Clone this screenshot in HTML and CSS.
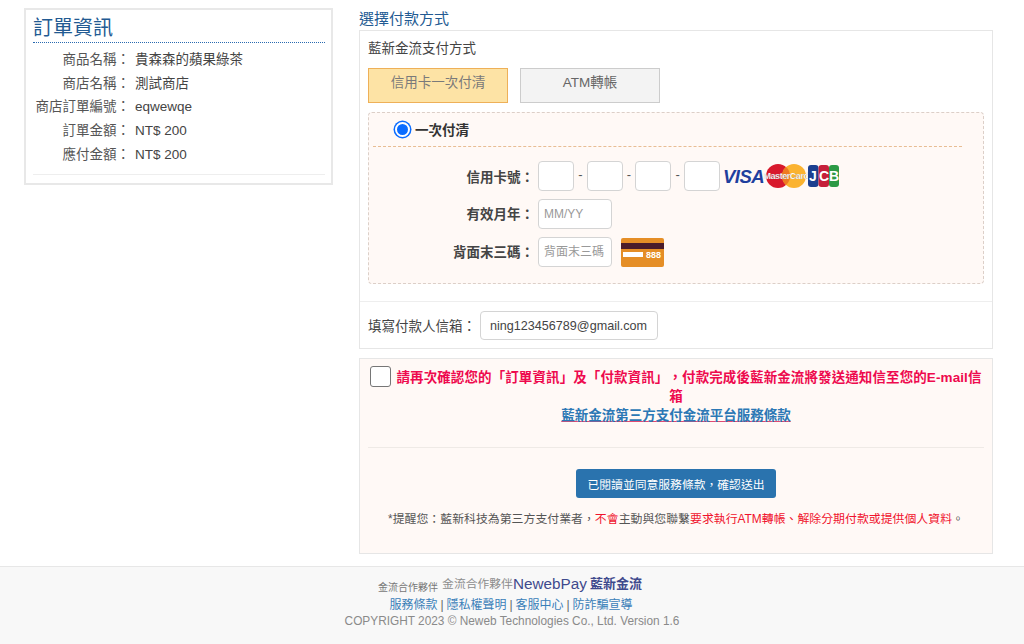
FILE: index.html
```html
<!DOCTYPE html>
<html lang="zh-Hant">
<head>
<meta charset="utf-8">
<title>選擇付款方式</title>
<link rel="stylesheet" href="styles.css">
</head>
<body>
<main class="page">
  <aside class="order">
    <h2 class="order-title">訂單資訊</h2>
    <dl class="order-list">
      <div class="order-row"><dt>商品名稱：</dt><dd>貴森森的蘋果綠茶</dd></div>
      <div class="order-row"><dt>商店名稱：</dt><dd>測試商店</dd></div>
      <div class="order-row"><dt>商店訂單編號：</dt><dd>eqwewqe</dd></div>
      <div class="order-row"><dt>訂單金額：</dt><dd>NT$ 200</dd></div>
      <div class="order-row"><dt>應付金額：</dt><dd>NT$ 200</dd></div>
    </dl>
  </aside>
  <section class="pay">
    <h3 class="pay-title">選擇付款方式</h3>
    <div class="panel">
      <div class="panel-body">
        <div class="method-title">藍新金流支付方式</div>
        <div class="tabs">
          <div class="tab tab-active">信用卡一次付清</div>
          <div class="tab">ATM轉帳</div>
        </div>
        <div class="card-box">
          <div class="radio-row">
            <span class="radio"></span>
            <span class="radio-label">一次付清</span>
          </div>
          <div class="form-row row-number">
            <span class="form-label">信用卡號：</span>
            <span class="input input-digit"></span><span class="dash">-</span>
            <span class="input input-digit"></span><span class="dash">-</span>
            <span class="input input-digit"></span><span class="dash">-</span>
            <span class="input input-digit"></span>
            <svg class="brands" width="118" height="26" viewBox="0 0 118 26" aria-label="VISA MasterCard JCB">
              <text x="1" y="19.500" class="visa">VISA</text>
              <circle cx="56" cy="13" r="12" fill="#d8192c"/>
              <circle cx="72" cy="13" r="12" fill="#fbb330"/>
              <path d="M64 4a12 12 0 0 1 0 18a12 12 0 0 1 0-18z" fill="#ee7a22"/>
              <text x="64" y="16" class="mc">MasterCard</text>
              <rect x="86" y="2" width="10.500" height="22" rx="3" fill="#1c3f8f"/>
              <rect x="96.500" y="2" width="10.500" height="22" rx="3" fill="#c5203a"/>
              <rect x="107" y="2" width="10" height="22" rx="3" fill="#2c9a45"/>
              <text x="91 102 112" y="18" class="jcb">JCB</text>
            </svg>
          </div>
          <div class="form-row">
            <span class="form-label form-label-up">有效月年：</span>
            <span class="input input-wide placeholder">MM/YY</span>
          </div>
          <div class="form-row">
            <span class="form-label form-label-up">背面末三碼：</span>
            <span class="input input-wide placeholder">背面末三碼</span>
            <svg class="cvc" width="43" height="30" viewBox="0 0 43 30" aria-label="888">
              <rect y="1" width="43" height="29" rx="2" fill="#e58e26"/>
              <rect y="6" width="43" height="6" fill="#4a1c2a"/>
              <rect x="2" y="15" width="20" height="5" fill="#fff"/>
              <text x="25" y="20.500" class="cvc-text">888</text>
            </svg>
          </div>
        </div>
      </div>
      <div class="email-row">
        <span class="email-label">填寫付款人信箱：</span>
        <span class="input input-email">ning123456789@gmail.com</span>
      </div>
    </div>
    <div class="confirm">
      <div class="confirm-text">
        <p class="warn"><span class="checkbox"></span>請再次確認您的「訂單資訊」及「付款資訊」，付款完成後藍新金流將發送通知信至您的E-mail信箱</p>
        <a class="terms" href="#">藍新金流第三方支付金流平台服務條款</a>
      </div>
      <div class="confirm-rule"></div>
      <div class="submit-wrap"><button class="submit" type="button">已閱讀並同意服務條款，確認送出</button></div>
      <p class="notice">*提醒您：藍新科技為第三方支付業者，<span class="red">不會</span>主動與您聯繫<span class="red">要求執行ATM轉帳、解除分期付款或提供個人資料</span>。</p>
    </div>
  </section>
</main>
<footer class="footer">
  <div class="partner"><span class="partner-small">金流合作夥伴</span><span class="partner-mid">金流合作夥伴</span><span class="partner-brand">NewebPay</span><span class="partner-cn">藍新金流</span></div>
  <div class="links"><a href="#">服務條款</a> | <a href="#">隱私權聲明</a> | <a href="#">客服中心</a> | <a href="#">防詐騙宣導</a></div>
  <div class="copy">COPYRIGHT 2023 © Neweb Technologies Co., Ltd. Version 1.6</div>
</footer>
</body>
</html>
```
FILE: styles.css
```css
* { box-sizing: border-box; }
html, body { margin: 0; padding: 0; }
body {
  width: 1024px; height: 644px; overflow: hidden; background: #fff;
  font-family: "Liberation Sans", "Noto Sans CJK TC", sans-serif;
  font-size: 13.5px; color: #444;
  text-spacing-trim: space-all;
  display: flex; flex-direction: column;
}
.page { height: 566px; display: flex; align-items: flex-start; padding: 8px 31px 0 24px; gap: 26px; }
.order { width: 309px; height: 177px; border: 2px solid #e8e8e8; padding: 0 6px 0 7px; background: #fff; }
.order-title { margin: 0; height: 33px; border-bottom: 1px dotted #2a6ab0; font-size: 20px; line-height: 36px; font-weight: 400; color: #225a92; }
.order-list { margin: 5px 0 0; height: 127px; border-bottom: 1px solid #eee; }
.order-row { display: flex; height: 23.700px; line-height: 23.700px; }
.order-row dt { width: 104px; text-align: right; white-space: nowrap; flex: none; margin-left: -7px; margin-right: 5px; color: #555; }
.order-row dd { margin: 0; padding-left: 0; }
.pay { width: 634px; }
.pay-title { margin: 0; height: 22px; font-size: 15px; line-height: 21px; font-weight: 400; color: #225a92; }
.panel { height: 319px; border: 1px solid #e6e6e6; background: #fff; }
.panel-body { height: 271px; padding: 9px 8px 0; border-bottom: 1px solid #eee; }
.method-title { height: 28px; line-height: 17px; color: #444; }
.tabs { display: flex; gap: 12px; height: 35px; }
.tab { width: 140px; height: 35px; line-height: 27px; text-align: center; background: #f3f3f3; border: 1px solid #ccc; color: #666; }
.tab-active { background: #fde3a5; border-color: #eeb058; color: #7a7a7a; }
.card-box { margin-top: 9px; width: 616px; height: 172px; background: #fff9f6; border: 1px dashed #dccfc8; border-radius: 4px; padding: 0 4px; }
.radio-row { height: 34px; display: flex; align-items: center; gap: 5px; padding-left: 22px; padding-bottom: 1px; border-bottom: 1px dashed #e8bd94; width: 589px; font-weight: 700; font-size: 13.5px; color: #333; }
.radio { width: 15px; height: 15px; border-radius: 50%; background: #0a6cff; border: 2px solid #fff; box-shadow: 0 0 0 1.500px #0a6cff; }
.form-row { display: flex; align-items: center; height: 30px; margin-top: 8px; }
.row-number { margin-top: 14px; }
.form-label { width: 161px; margin-right: 4px; flex: none; text-align: right; font-weight: 700; font-size: 13.5px; color: #444; }
.form-label-up { padding-bottom: 2px; }
.input { display: block; height: 30px; background: #fff; border: 1px solid #d4d4d4; border-radius: 4px; }
.input-digit { width: 36px; flex: none; }
.input-wide { width: 74px; flex: none; }
.placeholder { font-size: 12px; line-height: 28px; padding-left: 5px; color: #999; white-space: nowrap; overflow: hidden; }
.dash { width: 12.700px; text-align: center; font-size: 13px; color: #555; flex: none; line-height: 28px; height: 30px; }
.brands { margin-left: 2px; flex: none; }
.visa { font: italic 700 18.500px "Liberation Sans", sans-serif; fill: #1f3f9e; letter-spacing: -0.5px; }
.mc { font: 700 9px "Liberation Sans", sans-serif; fill: #fff; stroke: #8a8a8a; stroke-width: 0.15px; text-anchor: middle; letter-spacing: -0.45px; }
.jcb { font: 700 14px "Liberation Sans", sans-serif; fill: #fff; text-anchor: middle; }
.cvc { margin-left: 9px; flex: none; }
.cvc-text { font: 700 9px "Liberation Sans", sans-serif; fill: #fff; }
.email-row { display: flex; align-items: center; height: 46px; padding-left: 8px; }
.email-label { width: 112px; flex: none; color: #444; white-space: nowrap; }
.input-email { width: 178px; height: 29px; line-height: 28px; padding-left: 9px; font-size: 12.600px; color: #444; white-space: nowrap; }
.confirm { height: 196px; margin-top: 9px; background: #fff9f6; border: 1px solid #e6e6e6; padding: 0 8px; }
.confirm-text { text-align: center; height: 88px; padding-top: 9px; }
.warn { margin: 0; font-weight: 700; font-size: 13.5px; line-height: 19px; letter-spacing: 0.1px; color: #ee0a4e; }
.checkbox { display: inline-block; vertical-align: -2px; width: 21px; height: 21px; margin: -6px 5px -3px 0; background: #fff; border: 1px solid #767676; border-radius: 3px; }
.terms { display: block; font-weight: 700; font-size: 13.5px; line-height: 19px; color: #2c78b5; text-decoration: underline; text-decoration-color: #e04a72; }
.confirm-rule { height: 1px; background: #efeae6; }
.submit-wrap { display: flex; justify-content: center; margin-top: 21px; }
.submit { width: 200px; height: 29px; border: 0; border-radius: 3px; background: #2a73ae; color: #fff; font: 11.800px "Liberation Sans", "Noto Sans CJK TC", sans-serif; padding: 0; }
.notice { margin: 14px 0 0; text-align: center; font-size: 11.900px; line-height: 14px; color: #555; }
.red { color: #f0132d; }
.footer { height: 78px; background: #f8f8f8; border-top: 1px solid #e7e7e7; text-align: center; color: #888; font-size: 12px; }
.partner { height: 20px; margin-top: 9px; padding-right: 4px; display: flex; justify-content: center; align-items: flex-start; }
.partner-small { font-size: 10px; line-height: 14px; margin-top: 5px; color: #777; margin-right: 4px; }
.partner-mid { font-size: 11.800px; line-height: 14px; margin-top: 1px; color: #8d8d8d; }
.partner-brand { font-size: 15.300px; color: #3f4a8d; line-height: 16px; margin-right: 3px; }
.partner-cn { font-size: 13px; font-weight: 700; color: #3f4a8d; line-height: 16px; }
.links { height: 17px; line-height: 17px; color: #666; margin-top: 1px; padding-right: 2px; word-spacing: -0.4px; }
.links a { color: #3a80b8; text-decoration: none; }
.copy { line-height: 15px; color: #8a8a8a; font-size: 11.850px; }
```
